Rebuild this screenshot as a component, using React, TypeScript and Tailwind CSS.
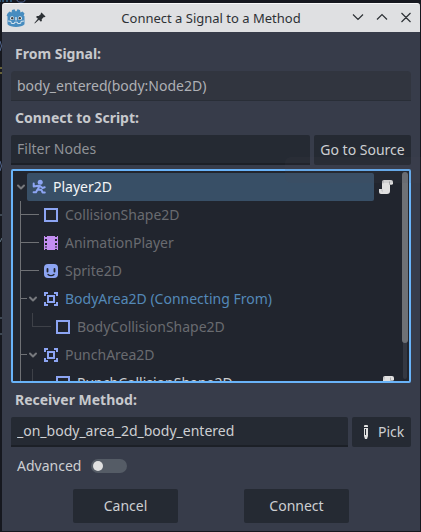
import React from "react";

type Kind = "player" | "shape" | "animation" | "sprite" | "area";

function NodeIcon({ kind }: { kind: Kind }) {
  return (
    <svg width="16" height="16" viewBox="0 0 16 16" className="shrink-0" fill="none">
      {kind === "shape" && <rect x="2" y="2" width="12" height="12" stroke="#8da5f3" strokeWidth="2" />}
      {kind === "area" && (
        <g stroke="#8da5f3" strokeWidth="2">
          <path d="M2 5V2h3M11 2h3v3M14 11v3h-3M5 14H2v-3" />
          <rect x="5" y="5" width="6" height="6" />
        </g>
      )}
      {kind === "animation" && (
        <path
          fill="#c38ef1"
          fillRule="evenodd"
          d="M1 1h1v1h2V1h8v1h2V1h1v14h-1v-1h-2v1H4v-1H2v1H1zM2 4v2h2V4zm0 4v2h2V8zm0 3.500v1h2v-1zM12 4v2h2V4zm0 4v2h2V8zm0 3.500v1h2v-1z"
        />
      )}
      {kind === "sprite" && (
        <>
          <rect x="1" y="1" width="14" height="14" rx="4" fill="#8da5f3" />
          <path d="M4.500 6v2.500M11.500 6v2.500" stroke="#21252e" strokeWidth="1.800" strokeLinecap="round" />
          <path d="M5 11.500c1.500 1.600 4.500 1.600 6 0" stroke="#21252e" strokeWidth="1.300" strokeLinecap="round" />
        </>
      )}
      {kind === "player" && (
        <g stroke="#8da5f3" strokeWidth="2" strokeLinecap="round" strokeLinejoin="round">
          <circle cx="9.200" cy="3.200" r="2.500" fill="#8da5f3" stroke="none" />
          <path d="M2.700 4.500v3l4.800-.8M8.300 7l-1.500 3.500M9 7l2.500 2 2.200-.7M6.500 10.500L5 13.200H2.600M7 10.500l3.500.4 1 2.500h2.300" />
        </g>
      )}
    </svg>
  );
}

function ScriptIcon() {
  return (
    <svg width="16" height="16" viewBox="0 0 16 16" className="shrink-0">
      <path d="M6 1h7a2 2 0 0 1 2 2v2h-3v7a3 3 0 0 1-3 3H3a2 2 0 0 1-2-2v-3h3V3a2 2 0 0 1 2-2z" fill="#e0e0e0" />
      <path d="M6 1.500c-1 0-1.500.8-1.500 1.500v1.500h1V3c0-.8.500-1.500.500-1.500zM3 10.500h1.500v3" fill="#b4b5b7" />
      <path d="M11.500 2.500v3h3" stroke="#a9aaac" fill="none" />
    </svg>
  );
}

type Item = {
  label: string;
  kind: Kind;
  lines?: "branch" | "parent" | "nested";
  color?: string;
  script?: boolean;
};

const items: Item[] = [
  { label: "CollisionShape2D", kind: "shape", lines: "branch" },
  { label: "AnimationPlayer", kind: "animation", lines: "branch" },
  { label: "Sprite2D", kind: "sprite", lines: "branch" },
  { label: "BodyArea2D (Connecting From)", kind: "area", lines: "parent", color: "text-[#5489b8]" },
  { label: "BodyCollisionShape2D", kind: "shape", lines: "nested" },
  { label: "PunchArea2D", kind: "area", lines: "parent" },
  { label: "PunchCollisionShape2D", kind: "shape", lines: "nested", color: "text-[#cdcfd1]", script: true },
];

function Connectors({ lines }: { lines: Item["lines"] }) {
  const nested = lines === "nested";
  return (
    <svg width={nested ? 42 : 30} height="28" className="shrink-0" fill="none" shapeRendering="crispEdges">
      <path d="M7.500 0v28" stroke="#6f7175" />
      {lines === "branch" && <path d="M8 13.500h18" stroke="#6f7175" />}
      {lines === "parent" && (
        <>
          <path d="M8 13.500h6" stroke="#6f7175" />
          <path d="M17 12.500l3 3 3-3" stroke="#77797d" strokeWidth="2" shapeRendering="auto" strokeLinecap="round" strokeLinejoin="round" />
        </>
      )}
      {nested && <path d="M19.500 0v13.500H38" stroke="#3e4148" />}
    </svg>
  );
}

function TreeRow({ item }: { item: Item }) {
  return (
    <div className="flex h-7 shrink-0 items-center">
      <Connectors lines={item.lines} />
      <NodeIcon kind={item.kind} />
      <span className={`ml-1.5 flex-1 whitespace-nowrap ${item.color ?? "text-[#696b70]"}`}>{item.label}</span>
      {item.script && <span className="mr-[7px]"><ScriptIcon /></span>}
    </div>
  );
}

function TitleBar() {
  return (
    <header className="flex h-[29px] shrink-0 items-center rounded-t-[3px] border-t border-[#f7f7f8] bg-[#dfe0e2] pl-1 pr-2 text-[#2d3135]">
      <svg width="20" height="20" viewBox="0 0 20 20" className="shrink-0">
        <path d="M1.500 5.500l2-2 2 1L6 2l2.500-.7 1 2h1l1-2L14 2l.5 2.500 2-1 2 2-.9 2.200.9.600v8c-1.500 2-5 2.700-8.500 2.700S3 18.300 1.500 16.300v-8l-.9-.600z" fill="#478cbf" />
        <path d="M2 13l3 .4.300 2 3 .2.300-1.400h2.800l.3 1.400 3-.2.300-2 3-.4" fill="none" stroke="#e6eef4" strokeWidth=".9" />
        <circle cx="6" cy="10.200" r="1.900" fill="#f2f4f5" />
        <circle cx="14" cy="10.200" r="1.900" fill="#f2f4f5" />
        <circle cx="6.200" cy="10.300" r="1.200" fill="#414042" />
        <circle cx="13.800" cy="10.300" r="1.200" fill="#414042" />
        <path d="M10 9.500v2.500" stroke="#f2f4f5" strokeWidth="1.200" strokeLinecap="round" />
      </svg>
      <svg width="12" height="12" viewBox="0 0 12 12" className="ml-2 shrink-0">
        <path d="M7.500 .5l4 4-.8.8-.8-.3-2.200 2.200.2 1.500-1 1-1.900-1.900L.8 11.500l-.4-.4 3.500-4.300L2 5l1-1 1.700.1L7 1.900l-.3-.7z" fill="#2d3135" />
      </svg>
      <h1 className="flex-1 pl-[24px] text-center text-[13px] leading-7">Connect a Signal to a Method</h1>
      <svg width="60" height="12" viewBox="0 0 60 12" fill="none" stroke="#2d3135" strokeWidth="1.200" className="shrink-0">
        <path d="M1 2.500l5 5 5-5M25 7.500l5-5 5 5M49.500 1l9 9M58.500 1l-9 9" />
      </svg>
    </header>
  );
}

export default function App() {
  return (
    <div className="relative flex h-[532px] w-[421px] flex-col overflow-hidden bg-[#16181f] font-['Noto_Sans','Open_Sans',sans-serif] text-[14px] leading-5 text-[#cdcfd2]">
      <svg width="421" height="532" className="absolute inset-0" fill="none">
        <path d="M0 1h1M3 0v2M7 0v2M11 0v2" stroke="#438bc0" />
        <path d="M17 0c0 3 8 3 8 0" stroke="#506797" />
        <path d="M0 41q3 5 0 10M0 161q3 5 0 10" stroke="#53678f" />
        <path d="M0 68h2M0 73h2" stroke="#b9ad55" />
        <path d="M0 215h2M0 242l2-4M0 318h2M0 334h2" stroke="#667989" />
      </svg>
      <main className="relative ml-0.5 mr-px mt-[3px] flex h-[528px] flex-col rounded-t-[3px] bg-[#373c4a]">
        <TitleBar />
        <div className="flex flex-col px-[9px]">
          <h2 className="ml-1 mt-3 font-bold text-[#c7c9cd]">From Signal:</h2>
          <div className="mt-[7px] flex h-[30px] items-center rounded-t-sm border-b border-[#292e37] bg-[#31353f] px-1.5 text-[#aeb0b5]">body_entered(body:Node2D)</div>
          <h2 className="ml-1 mt-[7px] font-bold text-[#c7c9cd]">Connect to Script:</h2>
          <div className="mt-[7px] flex h-[30px] gap-1">
            <input
              placeholder="Filter Nodes"
              className="w-[299px] rounded-t-xs border-b-2 border-[#1c2027] bg-[#252a33] px-1.5 outline-none placeholder:text-[#8f9297]"
            />
            <button className="flex-1 rounded-xs bg-[#252a33]">Go to Source</button>
          </div>
          <div className="mt-1 flex h-[214px] overflow-hidden rounded-xs border-2 border-[#69b3f8] bg-[#21252e]">
            <div className="flex flex-1 flex-col overflow-hidden pt-0.5">
              <div className="flex h-7 shrink-0 items-center">
                <svg width="14" height="28" fill="none" className="shrink-0">
                  <path d="M5 12.500l3 3 3-3" stroke="#77797d" strokeWidth="2" strokeLinecap="round" strokeLinejoin="round" />
                </svg>
                <div className="flex h-7 w-[347px] items-center rounded-xs bg-[#384f66] pl-1 text-[#f3f5f7]">
                  <NodeIcon kind="player" />
                  <span className="ml-1.5">Player2D</span>
                </div>
                <span className="ml-1"><ScriptIcon /></span>
              </div>
              {items.map((item) => <TreeRow key={item.label} item={item} />)}
            </div>
            <div className="mb-0.5 mr-px mt-px w-1.5 shrink-0 rounded-full">
              <div className="mx-auto h-full w-1 rounded-full bg-[#343842]">
                <div className="-mx-px h-[171px] w-1.5 rounded-full bg-[#6e7176]" />
              </div>
            </div>
          </div>
          <h2 className="ml-1 mt-[7px] font-bold text-[#c7c9cd]">Receiver Method:</h2>
          <div className="mt-[7px] flex h-[30px] gap-1">
            <input
              defaultValue="_on_body_area_2d_body_entered"
              className="w-[337px] rounded-t-xs border-b-2 border-[#1c2027] bg-[#252a33] px-1.5 outline-none"
            />
            <button className="flex flex-1 items-center rounded-xs bg-[#252a33] pl-1.5">
              <svg width="16" height="16" viewBox="0 0 16 16">
                <path fillRule="evenodd" fill="#e0e0e0" d="M7 1h2a1 1 0 0 1 1 1v1H6V2a1 1 0 0 1 1-1zM6 4h4v8l-1 3H7l-1-3zM7 5v6h1V5z" />
              </svg>
              <span className="ml-1">Pick</span>
            </button>
          </div>
          <label className="mt-[9px] flex h-5 items-center pl-1.5">
            Advanced
            <span className="ml-2.5 flex h-3.5 w-9 items-center rounded-full bg-[#555c66] pl-0.5">
              <span className="size-2.5 rounded-full bg-[#e0e0e0]" />
            </span>
          </label>
        </div>
        <footer className="mt-[13px] flex gap-[66px] pl-[71px]">
          <button className="h-[34px] w-[105px] rounded-xs bg-[#252a33]">Cancel</button>
          <button className="h-[34px] w-[105px] rounded-xs bg-[#252a33]">Connect</button>
        </footer>
      </main>
      <div className="pointer-events-none absolute right-0 top-[157px] h-[26px] w-[136px] rounded-l-md bg-[#50505d]/10" />
    </div>
  );
}
